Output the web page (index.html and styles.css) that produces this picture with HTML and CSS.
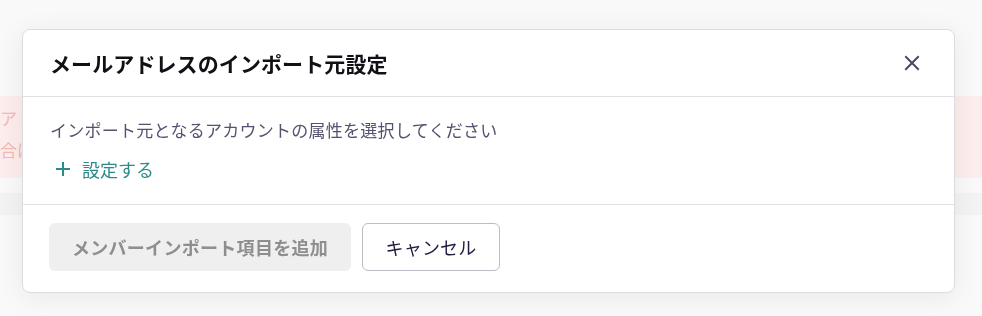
FILE: index.html
```html
<!DOCTYPE html>
<html lang="ja">
<head>
<meta charset="utf-8">
<title>メールアドレスのインポート元設定</title>
<link rel="stylesheet" href="styles.css">
</head>
<body>
<div class="page">
  <div class="page-top"></div>
  <div class="alert">
    <p class="alert-line">アド</p>
    <p class="alert-line">合は</p>
  </div>
  <div class="page-gap"></div>
  <div class="page-row"></div>
</div>

<div class="dialog" role="dialog" aria-labelledby="dlg-title">
  <div class="dialog-header">
    <h2 id="dlg-title" class="dialog-title">メールアドレスのインポート元設定</h2>
    <button class="close-btn" aria-label="閉じる">
      <svg width="16" height="16" viewBox="0 0 16 16" aria-hidden="true"><path d="M2 2 L14 14 M14 2 L2 14" stroke="currentColor" stroke-width="2" stroke-linecap="square" fill="none"/></svg>
    </button>
  </div>
  <div class="dialog-body">
    <p class="desc">インポート元となるアカウントの属性を選択してください</p>
    <button class="add-link">
      <svg width="16" height="16" viewBox="0 0 16 16" aria-hidden="true"><path d="M8 1 V15 M1 8 H15" stroke="currentColor" stroke-width="2" fill="none"/></svg>
      <span>設定する</span>
    </button>
  </div>
  <div class="dialog-footer">
    <button class="btn btn-primary" disabled>メンバーインポート項目を追加</button>
    <button class="btn btn-secondary">キャンセル</button>
  </div>
</div>
</body>
</html>
```

FILE: styles.css
```css
* { box-sizing: border-box; }
html, body { margin: 0; padding: 0; }
body {
  width: 982px;
  height: 316px;
  overflow: hidden;
  background: #f9f9f9;
  font-family: "Noto Sans CJK JP", "Noto Sans", sans-serif;
}
.page { display: flex; flex-direction: column; }
.page-top { height: 96px; }
.alert {
  height: 82px;
  background: #fdeeed;
  padding: 6px 0 0 0;
}
.alert-line {
  margin: 0;
  font-size: 17px;
  line-height: 32px;
  color: #f3b9b3;
  white-space: nowrap;
}
.page-gap { height: 15px; }
.page-row { height: 22px; background: #f3f3f3; }

.dialog {
  position: fixed;
  left: 22px;
  top: 29px;
  width: 933px;
  height: 264px;
  background: #fff;
  border: 1px solid #dcdcdf;
  border-radius: 8px;
  box-shadow: 0 4px 28px rgba(0, 0, 0, 0.07);
  display: flex;
  flex-direction: column;
}
.dialog-header {
  height: 67px;
  display: flex;
  align-items: center;
  justify-content: space-between;
  padding: 0 34px 0 27px;
  border-bottom: 1px solid #e0e0e5;
}
.dialog-title {
  margin: 0;
  font-size: 21px;
  font-weight: 700;
  letter-spacing: 0.1px;
  color: #111016;
  line-height: 1;
}
.close-btn {
  width: 16px;
  height: 16px;
  padding: 0;
  border: 0;
  background: none;
  color: #4a4966;
  display: flex;
}
.dialog-body {
  height: 108px;
  padding: 21px 27px 0 27px;
  border-bottom: 1px solid #e0e0e5;
  display: flex;
  flex-direction: column;
  align-items: flex-start;
  gap: 15px;
}
.desc {
  margin: 0;
  font-size: 17px;
  letter-spacing: 0.27px;
  line-height: 24px;
  color: #54526e;
}
.add-link {
  display: flex;
  align-items: center;
  gap: 11px;
  padding: 0 0 0 5px;
  border: 0;
  background: none;
  font-family: inherit;
  font-size: 18px;
  line-height: 24px;
  color: #2c8a8a;
}
.add-link svg { flex: none; }
.dialog-footer {
  flex: 1;
  display: flex;
  align-items: flex-start;
  gap: 11px;
  padding: 18px 26px 0 26px;
}
.btn {
  height: 48px;
  border-radius: 6px;
  font-family: inherit;
  font-size: 18px;
  padding: 0 22px;
  display: flex;
  align-items: center;
}
.btn-primary {
  width: 302px;
  justify-content: center;
  background: #efefef;
  border: 0;
  color: #8e8e8e;
  font-weight: 700;
  letter-spacing: 0.3px;
}
.btn-secondary {
  width: 138px;
  justify-content: center;
  background: #fff;
  border: 1px solid #bdbcc4;
  color: #1f1d3d;
  letter-spacing: 0.2px;
}
```
